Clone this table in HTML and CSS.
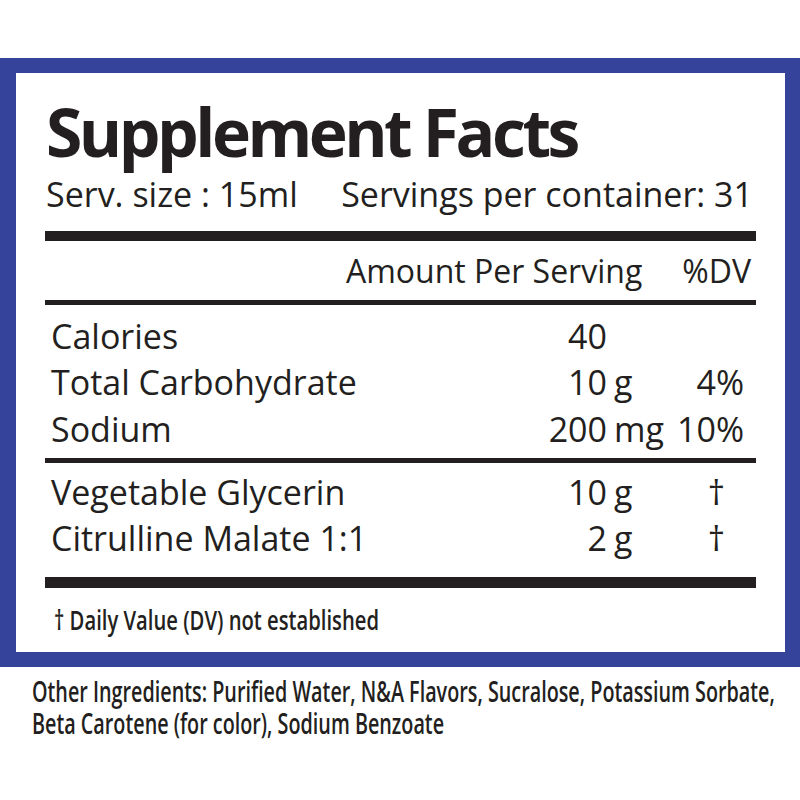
FILE: index.html
```html
<!DOCTYPE html>
<html lang="en">
<head>
<meta charset="utf-8">
<title>Supplement Facts</title>
<link rel="stylesheet" href="styles.css">
</head>
<body>
<div class="panel">
  <h1 class="title">Supplement Facts</h1>
  <div class="serving"><span>Serv. size : 15ml</span><span>Servings per container: 31</span></div>
  <div class="bar bar-top"></div>
  <div class="head"><span>Amount Per Serving</span><span class="head-dv">%DV</span></div>
  <div class="rule rule-head"></div>
  <div class="rows rows-main">
    <div class="row"><span class="name">Calories</span><span class="num">40</span><span class="unit"></span><span class="dv"></span></div>
    <div class="row"><span class="name">Total Carbohydrate</span><span class="num">10</span><span class="unit">g</span><span class="dv">4%</span></div>
    <div class="row"><span class="name">Sodium</span><span class="num">200</span><span class="unit">mg</span><span class="dv">10%</span></div>
  </div>
  <div class="rule rule-mid"></div>
  <div class="rows rows-extra">
    <div class="row"><span class="name">Vegetable Glycerin</span><span class="num">10</span><span class="unit">g</span><span class="dv dagger">†</span></div>
    <div class="row"><span class="name">Citrulline Malate 1:1</span><span class="num">2</span><span class="unit">g</span><span class="dv dagger">†</span></div>
  </div>
  <div class="bar bar-bottom"></div>
  <p class="note"><span class="note-text">† Daily Value (DV) not established</span></p>
</div>
<div class="other">
  <span class="other-line">Other Ingredients: Purified Water, N&amp;A Flavors, Sucralose, Potassium Sorbate,</span>
  <span class="other-line">Beta Carotene (for color), Sodium Benzoate</span>
</div>
</body>
</html>
```

FILE: styles.css
```css
html, body {
  margin: 0;
  padding: 0;
  background: #ffffff;
}

body {
  width: 800px;
  color: #231f20;
  font-family: "Open Sans", "Noto Sans", sans-serif;
}

.panel {
  margin-top: 58px;
  border-style: solid;
  border-color: #35449a;
  border-width: 15px 15px 15px 16px;
  padding: 25px 29px 16px 29px;
  background: #ffffff;
}

.title {
  margin: 0 0 0 1px;
  font-size: 66px;
  line-height: 66px;
  font-weight: 700;
  letter-spacing: -3.5px;
  white-space: nowrap;
}

.serving {
  margin-top: 10px;
  display: flex;
  justify-content: space-between;
  padding: 0 3px 0 1px;
  font-size: 34px;
  line-height: 40px;
  white-space: nowrap;
}

.bar {
  background: #231f20;
}

.bar-top {
  margin-top: 17px;
  height: 10px;
}

.bar-bottom {
  margin-top: 15.5px;
  height: 11px;
}

.head {
  margin-top: 8px;
  display: flex;
  justify-content: flex-end;
  gap: 40px;
  padding-right: 5px;
  font-size: 32px;
  line-height: 44px;
  white-space: nowrap;
}

.rule {
  height: 5px;
  background: #231f20;
}

.rule-head {
  margin-top: 7px;
}

.rule-mid {
  margin-top: 6px;
}

.rows-main {
  margin-top: 7.5px;
}

.rows-extra {
  margin-top: 5.5px;
}

.row {
  display: grid;
  grid-template-columns: 1fr 80px 56px 81px;
  padding-right: 12px;
  font-size: 34px;
  line-height: 46.5px;
  white-space: nowrap;
}

.name {
  padding-left: 6px;
}

.num {
  text-align: right;
}

.unit {
  padding-left: 7px;
}

.dv {
  text-align: right;
}

.dagger {
  padding-right: 19px;
}

.note {
  margin: 15.7px 0 0 0;
  padding-left: 9px;
  font-size: 26.6px;
  line-height: 32px;
  font-weight: 600;
  white-space: nowrap;
}

.note-text {
  display: inline-block;
  transform: scaleX(0.76);
  transform-origin: 0 0;
}

.other {
  margin-top: 8.75px;
  padding-left: 32px;
  font-size: 29.5px;
  line-height: 32px;
  font-weight: 600;
}

.other-line {
  display: block;
  width: max-content;
  white-space: nowrap;
  transform: scaleX(0.67);
  transform-origin: 0 0;
}
```
